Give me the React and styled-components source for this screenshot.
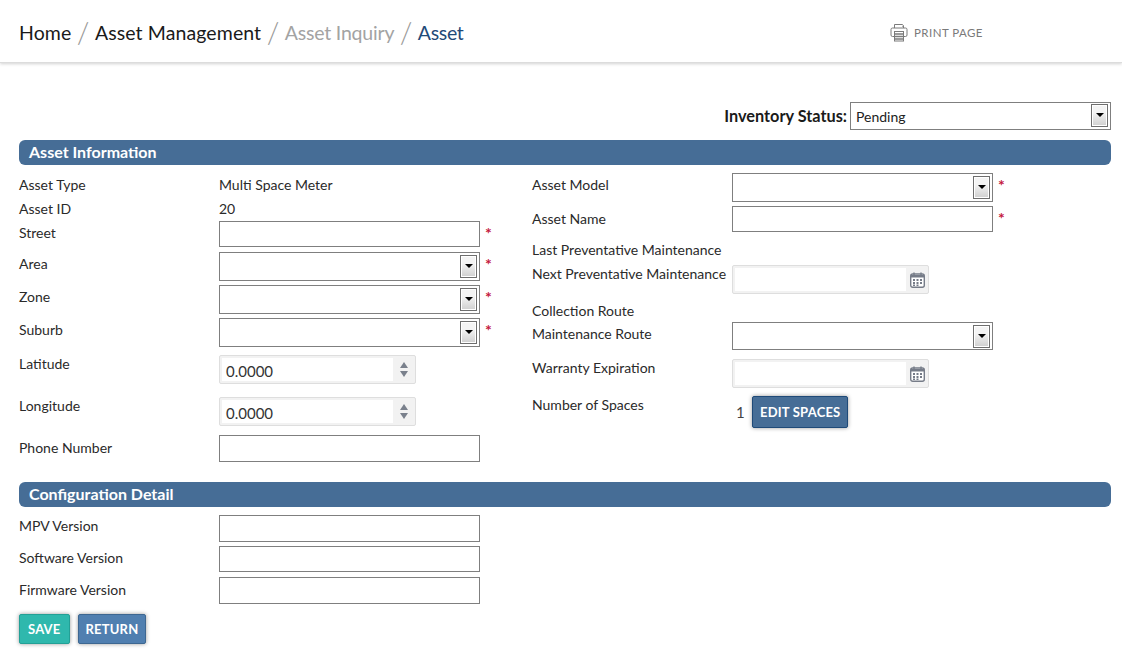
import React from 'react';
import styled, { createGlobalStyle } from 'styled-components';

const GlobalStyle = createGlobalStyle`
	html, body {
		margin: 0;
		padding: 0;
		background: #fff;
		color: #222;
		font-family: "Lato", "Liberation Sans", sans-serif;
		font-size: 14px;
	}
`;

const Page = styled.div`
	width: 1122px;
	height: 651px;
	overflow: hidden;
`;

const Header = styled.header`
	display: flex;
	align-items: center;
	height: 63px;
	padding: 2px 0 0 19px;
	box-sizing: border-box;
	border-bottom: 1px solid #dcdcdc;
	box-shadow: 0 1px 3px rgba(0, 0, 0, 0.18);
`;

const Crumbs = styled.nav`
	display: flex;
	align-items: center;
	width: 871px;
	font-size: 19.5px;
`;

const Crumb = styled.span`
	color: ${(p) => p.$color || '#1a1a1a'};
	letter-spacing: ${(p) => p.$track || 0}px;
`;

const Slash = styled.span`
	display: inline-block;
	width: 23.5px;
	text-align: center;
	color: #999;
	font-size: 29px;
	font-weight: 300;
	line-height: 24px;
`;

const PrintLink = styled.a`
	display: flex;
	align-items: center;
	gap: 6px;
	color: #7a7a7a;
	font-size: 11.5px;
	letter-spacing: 0.45px;
`;

const Content = styled.main`
	padding: 38px 11px 0 19px;
`;

const StatusRow = styled.div`
	display: flex;
	justify-content: flex-end;
	align-items: center;
	gap: 3px;
	height: 29px;
	margin-bottom: 10px;
`;

const StatusLabel = styled.label`
	font-weight: 700;
	font-size: 16.3px;
	color: #1a1a1a;
`;

const SectionBar = styled.h2`
	margin: 0 0 8px;
	height: 25px;
	padding-left: 10px;
	border-radius: 6px;
	background: #466d96;
	color: #fff;
	font-size: 16px;
	font-weight: 700;
	line-height: 24px;
`;

const Columns = styled.div`
	display: grid;
	grid-template-columns: 513px 1fr;
	margin-bottom: 20px;
`;

const Column = styled.div`
	display: flex;
	flex-direction: column;
`;

const Row = styled.div`
	display: grid;
	grid-template-columns: 200px 1fr;
	height: ${(p) => p.$h}px;
	margin-bottom: ${(p) => p.$after || 0}px;
`;

const Label = styled.span`
	font-size: 14px;
	line-height: ${(p) => p.$lh || 24}px;
	color: #2a2a2a;
	white-space: nowrap;
`;

const Value = styled.span`
	font-size: 14px;
	line-height: 24px;
	color: #2a2a2a;
`;

const Control = styled.div`
	display: flex;
	align-items: flex-start;
	padding-top: ${(p) => p.$top || 0}px;
`;

const TextBox = styled.input`
	box-sizing: border-box;
	width: 261px;
	height: ${(p) => p.$h || 26}px;
	border: 1px solid #7f7f7f;
	background: #fff;
	padding: 0 6px;
	outline: none;
`;

const Required = styled.span`
	margin: 5px 0 0 5px;
	width: 12px;
	color: #c4173c;
	font-size: 16px;
	font-weight: 700;
	line-height: 14px;
`;

const SelectBox = styled.div`
	display: flex;
	align-items: center;
	justify-content: space-between;
	box-sizing: border-box;
	width: 261px;
	height: ${(p) => p.$h || 29}px;
	border: 1px solid #7f7f7f;
	padding: 0 2px 0 5px;
	background: #fff;
	font-size: 14px;
	color: #222;
`;

const SelectText = styled.span`
	padding-top: 2px;
`;

const SelectArrow = styled.span`
	position: relative;
	box-sizing: border-box;
	width: 17px;
	height: 23px;
	border: 1px solid #6e6e6e;
	background: linear-gradient(#f4f4f4 35%, #cfcfcf);
	box-shadow: inset 0 0 0 1px #fff;

	&::after {
		content: '';
		position: absolute;
		left: 3.5px;
		top: 8px;
		border-style: solid;
		border-width: 4px 4px 0;
		border-color: #000 transparent transparent;
	}
`;

const FrameBox = styled.div`
	display: flex;
	align-items: center;
	box-sizing: border-box;
	width: 197px;
	height: 29px;
	border: 1px solid #dedede;
	border-radius: 2px;
	background: #f2f2f2;
	padding: 2px 0 2px 2px;
`;

const FrameInner = styled.div`
	width: 171px;
	height: 100%;
	padding-left: 4px;
	box-sizing: border-box;
	background: #fff;
	font-size: 15px;
	line-height: 26px;
	color: #333;
`;

const FrameSide = styled.div`
	flex: 1;
	display: flex;
	flex-direction: column;
	align-items: center;
	justify-content: center;
	gap: 3px;
`;

const SpinArrow = styled.span`
	border-style: solid;
	border-color: transparent;
	border-width: ${(p) => (p.$down ? '6px 4px 0' : '0 4px 6px')};
	border-top-color: ${(p) => (p.$down ? '#7a808c' : 'transparent')};
	border-bottom-color: ${(p) => (p.$down ? 'transparent' : '#7a808c')};
`;

const Count = styled.span`
	width: 20px;
	padding-left: 4px;
	box-sizing: border-box;
	font-size: 15px;
	line-height: 32px;
	color: #444;
`;

const Button = styled.button`
	height: ${(p) => p.$h || 30}px;
	padding: 0 ${(p) => p.$pad || 7}px;
	border: 1px solid ${(p) => p.$edge};
	border-radius: 2px;
	background: ${(p) => p.$bg};
	box-shadow: 0 0 4px rgba(0, 0, 0, 0.4);
	color: #fff;
	font-family: inherit;
	font-size: 13px;
	font-weight: 700;
	letter-spacing: 0.2px;
`;

const Actions = styled.div`
	display: flex;
	gap: 8px;
	margin-top: 10px;
`;

const ConfigRow = styled(Row)`
	width: 461px;
`;

const PrintIcon = () => (
	<svg width="18" height="19" viewBox="0 0 18 19" fill="none" stroke="#7b7b7b" strokeWidth="1">
		<path d="M4.5 5V1.5h8l1 1V5" />
		<path d="M4 13.5H2.5a1.5 1.5 0 0 1-1.5-1.500V6.500A1.500 1.500 0 0 1 2.500 5h13A1.500 1.500 0 0 1 17 6.500V12a1.500 1.500 0 0 1-1.500 1.500H14" />
		<rect x="4.500" y="8.500" width="9" height="9.500" fill="#fff" />
		<path d="M4.500 11h9M4.500 13.500h9M4.500 16h9" strokeWidth="1.400" />
		<path d="M12 3.200h.8" />
	</svg>
);

const CalendarIcon = () => (
	<svg width="15" height="16" viewBox="0 0 15 16">
		<rect x="0.700" y="2" width="13.600" height="13.300" rx="2" fill="#fff" stroke="#767c88" strokeWidth="1.400" />
		<path d="M1 3h13v2.500H1z" fill="#767c88" />
		<path d="M4 0.500v3M11 0.500v3" stroke="#767c88" strokeWidth="1.400" />
		<path
			d="M3 7h2v2H3zM6.500 7h2v2h-2zM10 7h2v2h-2zM3 10h2v2H3zM6.500 10h2v2h-2zM10 10h2v2h-2zM6.500 12.600h2v1.400h-2zM3 12.600h2v1.400H3z"
			fill="#767c88"
		/>
	</svg>
);

const Select = ({ value, h }) => (
	<SelectBox $h={h}>
		<SelectText>{value}</SelectText>
		<SelectArrow />
	</SelectBox>
);

const SpinBox = ({ value }) => (
	<FrameBox>
		<FrameInner>{value}</FrameInner>
		<FrameSide>
			<SpinArrow />
			<SpinArrow $down />
		</FrameSide>
	</FrameBox>
);

const DateBox = () => (
	<FrameBox>
		<FrameInner />
		<FrameSide>
			<CalendarIcon />
		</FrameSide>
	</FrameBox>
);

const App = () => {
	return (
		<Page>
			<GlobalStyle />
			<Header>
				<Crumbs>
					<Crumb $track={0.1}>Home</Crumb>
					<Slash>/</Slash>
					<Crumb $track={0.1}>Asset Management</Crumb>
					<Slash>/</Slash>
					<Crumb $color="#a3a3a3" $track={-0.2}>Asset Inquiry</Crumb>
					<Slash>/</Slash>
					<Crumb $color="#1f4a78" $track={-0.3}>Asset</Crumb>
				</Crumbs>
				<PrintLink>
					<PrintIcon />
					PRINT PAGE
				</PrintLink>
			</Header>

			<Content>
				<StatusRow>
					<StatusLabel>Inventory Status:</StatusLabel>
					<Select value="Pending" h={28} />
				</StatusRow>

				<SectionBar>Asset Information</SectionBar>
				<Columns>
					<Column>
						<Row $h={24}>
							<Label>Asset Type</Label>
							<Value>Multi Space Meter</Value>
						</Row>
						<Row $h={24}>
							<Label>Asset ID</Label>
							<Value>20</Value>
						</Row>
						<Row $h={26} $after={5}>
							<Label>Street</Label>
							<Control>
								<TextBox />
								<Required>*</Required>
							</Control>
						</Row>
						<Row $h={29} $after={4}>
							<Label>Area</Label>
							<Control>
								<Select />
								<Required>*</Required>
							</Control>
						</Row>
						<Row $h={29} $after={4}>
							<Label>Zone</Label>
							<Control>
								<Select />
								<Required>*</Required>
							</Control>
						</Row>
						<Row $h={29} $after={8}>
							<Label>Suburb</Label>
							<Control>
								<Select />
								<Required>*</Required>
							</Control>
						</Row>
						<Row $h={29} $after={13}>
							<Label $lh={18}>Latitude</Label>
							<Control>
								<SpinBox value="0.0000" />
							</Control>
						</Row>
						<Row $h={29} $after={9}>
							<Label $lh={18}>Longitude</Label>
							<Control>
								<SpinBox value="0.0000" />
							</Control>
						</Row>
						<Row $h={27}>
							<Label $lh={26}>Phone Number</Label>
							<Control>
								<TextBox $h={27} />
							</Control>
						</Row>
					</Column>

					<Column>
						<Row $h={29} $after={4}>
							<Label>Asset Model</Label>
							<Control>
								<Select />
								<Required>*</Required>
							</Control>
						</Row>
						<Row $h={26} $after={6}>
							<Label $lh={26}>Asset Name</Label>
							<Control>
								<TextBox />
								<Required>*</Required>
							</Control>
						</Row>
						<Row $h={24}>
							<Label>Last Preventative Maintenance</Label>
						</Row>
						<Row $h={32} $after={5}>
							<Label>Next Preventative Maintenance</Label>
							<Control $top={3}>
								<DateBox />
							</Control>
						</Row>
						<Row $h={23}>
							<Label>Collection Route</Label>
						</Row>
						<Row $h={28} $after={9}>
							<Label>Maintenance Route</Label>
							<Control>
								<Select h={28} />
							</Control>
						</Row>
						<Row $h={29} $after={8}>
							<Label $lh={18}>Warranty Expiration</Label>
							<Control>
								<DateBox />
							</Control>
						</Row>
						<Row $h={32}>
							<Label $lh={18}>Number of Spaces</Label>
							<Control>
								<Count>1</Count>
								<Button $bg="#466d96" $edge="#1f4a78" $h={32}>EDIT SPACES</Button>
							</Control>
						</Row>
					</Column>
				</Columns>

				<SectionBar>Configuration Detail</SectionBar>
				<ConfigRow $h={27} $after={4}>
					<Label $lh={22}>MPV Version</Label>
					<TextBox $h={27} />
				</ConfigRow>
				<ConfigRow $h={26} $after={5}>
					<Label>Software Version</Label>
					<TextBox />
				</ConfigRow>
				<ConfigRow $h={27}>
					<Label $lh={26}>Firmware Version</Label>
					<TextBox $h={27} />
				</ConfigRow>

				<Actions>
					<Button $bg="#2fb8ad" $edge="#23a096" $pad={8}>SAVE</Button>
					<Button $bg="#507fb0" $edge="#3d6791">RETURN</Button>
				</Actions>
			</Content>
		</Page>
	);
};

export default App;
